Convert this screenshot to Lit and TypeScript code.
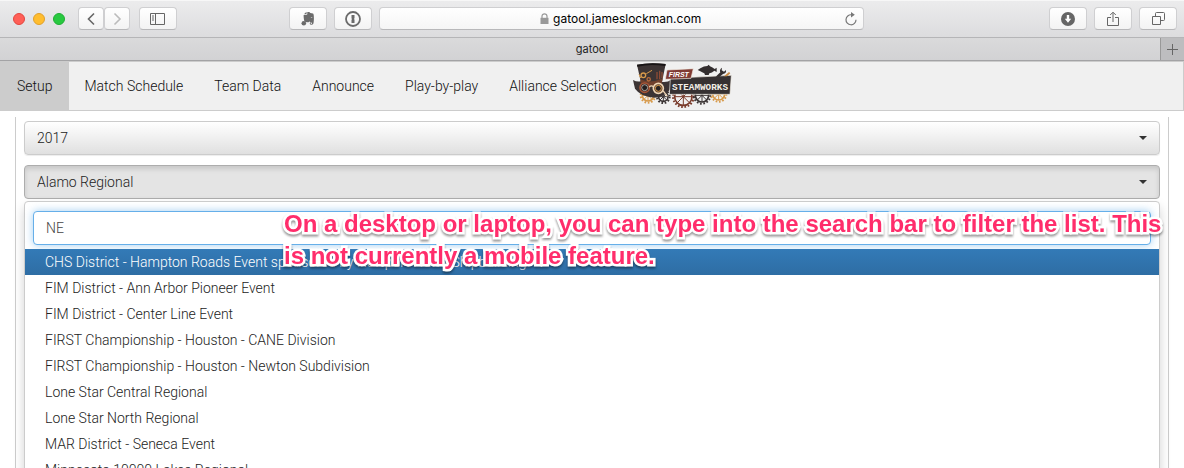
import { LitElement, html, css, svg } from "lit";
import { customElement, property, state } from "lit/decorators.js";

const icon = {
  back: html`<svg width="12" height="16" viewBox="0 0 12 16" fill="none" stroke="#666" stroke-width="1.6"><path d="M9 2.5 3.5 8 9 13.5" /></svg>`,
  forward: html`<svg width="12" height="16" viewBox="0 0 12 16" fill="none" stroke="#bbb" stroke-width="1.6"><path d="M3.5 2.500 9 8l-5.500 5.500" /></svg>`,
  sidebar: html`<svg width="16" height="14" viewBox="0 0 16 14" fill="none" stroke="#666"><path d="M.5 1.500h14v11H.5zM5.500 1.500v11M2 4h2M2 6h2M2 8h2" /></svg>`,
  elephant: html`<svg width="14" height="16" viewBox="0 0 14 16" fill="#6b6b6b"><path d="M5.500.8 5.600 3H3.200zM6.300 1h2l1 .9 2.700.5c.7.3.9 2.200.9 4.600 0 3-.2 6.300-1.300 6.600-1 .3-2.600.2-2.800-.8-.2-1.200.5-1.600 1.500-1.600v.9c-.5 0-.7.2-.6.6.2.5 1.200.4 1.200-.3 0-1.200-.6-1.500-1.600-1.500l-1.100-.5c-.3.8-1 1.100-2.200.9-1.800-.3-2.600-.3-2.900-2C2.800 8 2.600 5.500 2.600 4.600c0-.6.2-.8.8-.8h2.200c.5 0 .7-.2.7-.7z" /><circle cx="2.800" cy="12.200" r="2.300" /><path d="M9.600 6.600c.2-.9 1.700-.8 1.800.3-.6-.2-1.200-.3-1.800-.3z" fill="#fff" /></svg>`,
  onepass: html`<svg width="16" height="16" viewBox="0 0 16 16"><circle cx="8" cy="8" r="7" fill="none" stroke="#6b6b6b" stroke-width="1.800" /><path d="M6.500 4h3v3.200l-.6.7.6.6V12h-3V8.800l.6-.7-.6-.6z" fill="#6b6b6b" /></svg>`,
  lock: html`<svg width="9" height="11" viewBox="0 0 9 11"><path d="M2 5V3.300a2.500 2.500 0 0 1 5 0V5" fill="none" stroke="#999" stroke-width="1.200" /><path d="M.5 4.800h8V11h-8z" fill="#999" /></svg>`,
  reload: html`<svg width="14" height="14" viewBox="0 0 14 14"><path d="M7.500 2.800A5 5 0 1 0 12 7.800" fill="none" stroke="#777" stroke-width="1.200" /><path d="M7 0v5.600l3.800-2.800z" fill="#777" /></svg>`,
  download: html`<svg width="14" height="14" viewBox="0 0 14 14"><circle cx="7" cy="7" r="7" fill="#666" /><path d="M5.800 3h2.400v3.800h2L7 10.800 3.800 6.800h2z" fill="#fff" /></svg>`,
  share: html`<svg width="12" height="16" viewBox="0 0 12 16" fill="none" stroke="#666"><path d="M4 6.500H.5v8h11v-8H8M6 11V1.500M3.200 4 6 1.200 8.800 4" /></svg>`,
  tabs: html`<svg width="13" height="13" viewBox="0 0 13 13" fill="none" stroke="#666"><path d="M.5 4.500h8v8h-8zM3.500 4.500v-3q0-1 1-1h7q1 0 1 1v6q0 1-1 1h-3" /></svg>`,
  plus: html`<svg width="11" height="11" viewBox="0 0 11 11" stroke="#666"><path d="M5.500 0v11M0 5.500h11" /></svg>`,
  caret: html`<svg width="8" height="4" viewBox="0 0 8 4"><path d="M0 0h8L4 4z" fill="#333" /></svg>`,
};

const gear = (cx: number, cy: number, r: number, color: string) => svg`
  <circle cx=${cx} cy=${cy} r=${r} fill="none" stroke=${color} stroke-width="5" />
  <circle cx=${cx} cy=${cy} r=${r + 5} fill="none" stroke=${color} stroke-width="6" stroke-dasharray="5 5" />
  <path d="M${cx - r} ${cy}h${2 * r}M${cx} ${cy - r}v${2 * r}M${cx - r * 0.7} ${cy - r * 0.7}l${r * 1.4} ${r * 1.4}M${cx + r * 0.7} ${cy - r * 0.7}l${-r * 1.4} ${r * 1.4}" stroke=${color} stroke-width="3" />`;

@customElement("steamworks-logo")
export class SteamworksLogo extends LitElement {
  static styles = css`
    :host { display: block; }
    svg { display: block; }
    .first { font: italic bold 21px "Liberation Sans", sans-serif; fill: #fff; }
    .name { font: bold 28px "Liberation Mono", monospace; fill: #f3eee6; }
  `;
  render() {
    return html`<svg width="100" height="46" viewBox="36 12 300 138" role="img" aria-label="FIRST Steamworks">
      ${gear(84, 112, 17, "#d79a4b")}
      ${gear(130, 116, 14, "#3b3434")}
      ${gear(190, 116, 26, "#793b2b")}
      ${gear(246, 112, 20, "#3b3434")}
      ${gear(296, 108, 18, "#d79a4b")}
      <path d="M39 66Q50 72 62 70L51 20Q90 12 137 18L126 72Q144 74 153 65L155 88Q136 118 104 119Q62 116 45 92Z" fill="#3c3434" />
      <path d="M51 20Q90 12 137 18L136 24Q90 17 52 26Z" fill="#171415" />
      <path d="M61 64Q92 78 128 61L125 77Q92 90 63 79Z" fill="#70402d" />
      <path d="M111 42v22M119 38v25M126 42v18" stroke="#8d4b35" stroke-width="4" />
      <circle cx="70" cy="52" r="7" fill="none" stroke="#d79a4b" stroke-width="4" />
      <circle cx="86" cy="64" r="5" fill="none" stroke="#b66b3c" stroke-width="4" />
      <path d="M79 47 96 37M62 60 57 49" stroke="#d79a4b" stroke-width="3" />
      <circle cx="74" cy="89" r="14" fill="#241f20" stroke="#a75537" stroke-width="5" />
      <circle cx="74" cy="89" r="9" fill="none" stroke="#eee1d1" stroke-width="2" />
      <circle cx="115" cy="91" r="15" fill="#51362b" stroke="#efd5b3" stroke-width="5" />
      <circle cx="115" cy="91" r="9" fill="#292223" stroke="#d79a4b" stroke-width="3" />
      <path d="M88 87q6-7 13 0M129 98l13 17" stroke="#efd5b3" stroke-width="4" fill="none" />
      <path d="M151 61 334 52 330 109 148 109Z" fill="#363132" stroke="#f3eee6" stroke-width="2" />
      <path d="M141 36 220 32 213 61 136 64Z" fill="#803b34" stroke="#f3eee6" stroke-width="2" />
      <path d="M233 36 241 31Q252 24 262 24L266 20 270 25Q278 28 284 33L290 29V42L283 38Q276 44 268 46L266 51H255L253 46Q246 43 241 40Z" fill="#332e2f" />
      <path d="M287 56 301 43q-4-8 5-14l-1 8 7 4 6-5q2 11-9 12L298 57z" fill="#332e2f" />
      <path d="M312 55 327 42l4 4-10 9z" fill="#c88a43" />
      <text class="first" x="146" y="56">FIRST</text>
      <text class="name" x="156" y="95">STEAMWORKS</text>
    </svg>`;
  }
}

@customElement("browser-chrome")
export class BrowserChrome extends LitElement {
  @property() address = "";
  @property() heading = "";
  static styles = css`
    :host { display: block; }
    .toolbar { display: grid; grid-template-columns: 32fr 41fr 27fr; height: 37px; align-items: center; background: linear-gradient(#ececed, #dcdcde); border-bottom: 1px solid #b5b5b7; box-shadow: inset 0 1px #f7f7f7; }
    .left { display: flex; align-items: center; padding: 0 7px 0 13px; }
    .lights { display: flex; gap: 8px; margin-right: 13px; }
    .light { width: 12px; height: 12px; border-radius: 50%; box-sizing: border-box; border: 1px solid #e2463f; background: #ff5f57; }
    .min { border-color: #e0a02b; background: #ffbd2e; }
    .max { border-color: #1fae34; background: #28c940; }
    button { display: grid; place-items: center; width: 38px; height: 23px; padding: 0; box-sizing: border-box; border: 1px solid #cfcfd1; border-bottom-color: #b8b8ba; border-radius: 4px; background: linear-gradient(#fff, #f3f3f3); }
    .history { display: flex; margin-right: 9px; }
    .history button { width: 26px; }
    .group { display: flex; gap: 7px; }
    .extensions { margin-left: auto; }
    .right { justify-content: flex-end; padding-right: 7px; }
    .address { display: flex; align-items: center; height: 23px; box-sizing: border-box; border: 1px solid #cfcfd1; border-bottom-color: #b8b8ba; border-radius: 4px; background: linear-gradient(#fff, #f5f5f5); }
    .site { flex: 1; display: flex; justify-content: center; align-items: center; gap: 4px; padding-left: 28px; }
    input { width: 154px; padding: 0; border: 0; outline: 0; background: none; color: #000; font: 12px/18px Inter, sans-serif; }
    .address button { width: 24px; height: 20px; border: 0; background: none; }
    .tabbar { display: flex; height: 22px; background: linear-gradient(#dadadb, #d2d2d4); border-bottom: 1px solid #a3a3a5; }
    .tab { flex: 1; padding-left: 24px; text-align: center; font: 11px/22px Inter, sans-serif; color: #222; text-decoration: none; }
    .tabbar button { width: 24px; height: 22px; border: 0; border-left: 1px solid #999; border-radius: 0; background: #bdbdbf; }
  `;
  render() {
    return html`
      <div class="toolbar">
        <div class="left">
          <div class="lights"><span class="light"></span><span class="light min"></span><span class="light max"></span></div>
          <div class="history"><button aria-label="Back">${icon.back}</button><button aria-label="Forward">${icon.forward}</button></div>
          <button aria-label="Sidebar">${icon.sidebar}</button>
          <div class="group extensions"><button aria-label="Web clipper">${icon.elephant}</button><button aria-label="Passwords">${icon.onepass}</button></div>
        </div>
        <div class="address">
          <div class="site">${icon.lock}<input aria-label="Address" .value=${this.address} /></div>
          <button aria-label="Reload">${icon.reload}</button>
        </div>
        <div class="group right"><button aria-label="Downloads">${icon.download}</button><button aria-label="Share">${icon.share}</button><button aria-label="Show all tabs">${icon.tabs}</button></div>
      </div>
      <div class="tabbar"><a class="tab" href="#">${this.heading}</a><button aria-label="New tab">${icon.plus}</button></div>`;
  }
}

@customElement("app-root")
export class AppRoot extends LitElement {
  @state() private selected = 0;
  private pages = ["Setup", "Match Schedule", "Team Data", "Announce", "Play-by-play", "Alliance Selection"];
  private events = [
    "CHS District - Hampton Roads Event sponsored by Newport News Shipbuilding",
    "FIM District - Ann Arbor Pioneer Event",
    "FIM District - Center Line Event",
    "FIRST Championship - Houston - CANE Division",
    "FIRST Championship - Houston - Newton Subdivision",
    "Lone Star Central Regional",
    "Lone Star North Regional",
    "MAR District - Seneca Event",
    "Minnesota 10000 Lakes Regional",
  ];
  static styles = css`
    :host { display: flex; flex-direction: column; position: relative; height: 100vh; overflow: hidden; background: #fff; color: #222; font: 300 14px/20px Roboto, "Liberation Sans", sans-serif; }
    nav { display: flex; align-items: stretch; height: 48px; background: #f0f0f0; border: 1px solid #ccc; border-left: 0; }
    nav a { padding: 14px 15px 14px 16px; color: #111; text-decoration: none; white-space: nowrap; }
    nav .current { padding: 14px 16px 14px 17px; background: #ccc; }
    main { flex: 1; min-height: 0; margin: 6px 15px 0; padding: 4px 8px 0; border: solid #ccc; border-width: 0 1px; }
    .picker { position: relative; display: grid; align-items: center; margin-bottom: 10px; }
    .picker > * { grid-area: 1 / 1; }
    .picker > svg { justify-self: end; margin-right: 13px; pointer-events: none; }
    select { appearance: none; width: 100%; height: 34px; padding: 0 32px 0 12px; border: 1px solid #ccc; border-radius: 4px; background: linear-gradient(#fff, #e0e0e0); box-shadow: 0 1px 1px rgba(0, 0, 0, 0.075); color: #222; font: inherit; }
    .open select { background: #e4e4e4; border-color: #adadad; box-shadow: inset 0 3px 5px rgba(0, 0, 0, 0.125); }
    .menu { position: absolute; top: 100%; left: 0; right: 0; margin-top: 2px; border: 1px solid #ccc; border-radius: 4px; background: #fff; box-shadow: 0 6px 12px rgba(0, 0, 0, 0.175); }
    .search { display: block; padding: 9px 8px 4px; }
    .search input { display: block; width: 100%; height: 34px; box-sizing: border-box; padding: 0 12px; border: 1px solid #66afe9; border-radius: 4px; outline: 0; box-shadow: 0 0 8px rgba(102, 175, 233, 0.6); color: #444; font: inherit; }
    ul { position: relative; margin: 0; padding: 0; list-style: none; background: #fff; }
    li a { display: block; padding: 3px 20px; color: #222; text-decoration: none; white-space: nowrap; }
    li .active { color: #fff; background: linear-gradient(#337ab7, #2e6da4); }
    .callout { position: absolute; top: 208px; left: 284px; margin: 0; color: #ff2d6b; font: bold 24px/32px "Liberation Sans", Arial, sans-serif; white-space: nowrap; -webkit-text-stroke: 5px #fff; paint-order: stroke fill; stroke-linejoin: round; filter: drop-shadow(0 2px 1px rgba(0, 0, 0, 0.4)); pointer-events: none; }
  `;
  render() {
    return html`
      <browser-chrome address="gatool.jameslockman.com" heading="gatool"></browser-chrome>
      <nav>
        ${this.pages.map((p, i) => html`<a href="#" class=${i === 0 ? "current" : ""}>${p}</a>`)}
        <steamworks-logo></steamworks-logo>
      </nav>
      <main>
        <div class="picker"><select aria-label="Season"><option>2017</option></select>${icon.caret}</div>
        <div class="picker open">
          <select aria-label="Event"><option>Alamo Regional</option></select>${icon.caret}
          <div class="menu">
            <label class="search"><input type="text" aria-label="Search events" .value=${"NE"} /></label>
            <ul>
              ${this.events.map((e, i) => html`<li><a href="#" class=${i === this.selected ? "active" : ""} @mouseenter=${() => (this.selected = i)}>${e}</a></li>`)}
            </ul>
          </div>
        </div>
      </main>
      <p class="callout">On a desktop or laptop, you can type into the search bar to filter the list. This<br />is not currently a mobile feature.</p>`;
  }
}
